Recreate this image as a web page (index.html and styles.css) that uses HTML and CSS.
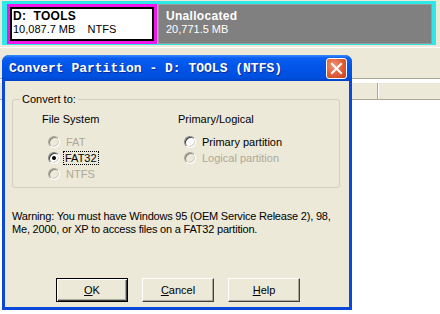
FILE: index.html
```html
<!DOCTYPE html>
<html lang="en">
<head>
  <meta charset="UTF-8">
  <meta name="viewport" content="width=device-width, initial-scale=1.0">
  <title>Convert Partition</title>
  <link rel="stylesheet" href="styles.css">
</head>
<body>
  <div class="map">
    <div class="strip">
      <div class="part part-d">
        <div class="part-inner">
          <div class="part-name">D:  TOOLS</div>
          <div class="part-size">10,087.7 MB    NTFS</div>
        </div>
      </div>
      <div class="part part-free">
        <div class="part-name">Unallocated</div>
        <div class="part-size">20,771.5 MB</div>
      </div>
    </div>
  </div>

  <div class="list">
    <div class="toolbar"></div>
    <div class="header">
      <div class="col col-main"></div>
      <div class="col col-rest"></div>
    </div>
    <div class="rows"></div>
  </div>

  <div class="dialog">
    <div class="titlebar">
      <span class="title">Convert Partition - D: TOOLS (NTFS)</span>
      <span class="close">
        <svg width="13" height="13" viewBox="0 0 13 13">
          <path d="M2 2 L11 11 M11 2 L2 11" stroke="#fff" stroke-width="2" stroke-linecap="square"/>
        </svg>
      </span>
    </div>
    <div class="body">
      <div class="group">
        <span class="group-title">Convert to:</span>
        <div class="columns">
          <div class="column">
            <div class="col-title">File System</div>
            <div class="radio disabled"><span class="dot"></span>FAT</div>
            <div class="radio checked"><span class="dot"></span><span class="focus">FAT32</span></div>
            <div class="radio disabled"><span class="dot"></span>NTFS</div>
          </div>
          <div class="column">
            <div class="col-title">Primary/Logical</div>
            <div class="radio"><span class="dot"></span>Primary partition</div>
            <div class="radio disabled"><span class="dot"></span>Logical partition</div>
          </div>
        </div>
      </div>
      <p class="warning">Warning: You must have Windows 95 (OEM Service Release 2), 98, Me, 2000, or XP to access files on a FAT32 partition.</p>
      <div class="buttons">
        <button class="btn default"><u>O</u>K</button>
        <button class="btn"><u>C</u>ancel</button>
        <button class="btn"><u>H</u>elp</button>
      </div>
    </div>
  </div>
</body>
</html>
```

FILE: styles.css
```css
body {
  margin: 0;
  width: 440px;
  height: 314px;
  overflow: hidden;
  position: relative;
  background: #fff;
  font-family: "Liberation Sans", Arial, sans-serif;
  font-size: 11px;
}
.map {
  height: 47px;
  box-sizing: border-box;
  padding: 1px 4px 2px 2px;
  background: #ece9d8;
}
.strip {
  display: flex;
  gap: 1px;
  height: 44px;
  box-sizing: border-box;
  padding: 3px 4px 1px 5px;
  background: #2ee8e8;
}
.part {
  height: 40px;
  box-sizing: border-box;
}
.part-d {
  width: 150px;
  border: 3px solid #f018e8;
}
.part-inner {
  height: 100%;
  box-sizing: border-box;
  border: 2px solid #000;
  background: #fff;
  padding: 1px 0 0 1px;
}
.part-free {
  flex: 1;
  background: #808080;
  border: 1px solid #9a9a9a;
  padding: 5px 0 0 7px;
  color: #fff;
}
.part-name {
  font-weight: bold;
  font-size: 12px;
  line-height: 13px;
  white-space: pre;
  letter-spacing: 0.3px;
}
.part-size {
  font-size: 11px;
  line-height: 13px;
  white-space: pre;
}
.list {
  height: 267px;
  display: flex;
  flex-direction: column;
}
.toolbar {
  height: 31px;
  background: #ece9d8;
  border-bottom: 1px solid #aca899;
  box-shadow: inset 0 1px #fff;
}
.header {
  display: flex;
  height: 18px;
  margin-top: 3px;
  background: #ece9d8;
  border-top: 1px solid #fff;
  border-bottom: 1px solid #aca899;
  box-sizing: border-box;
}
.col-main {
  width: 377px;
  border-right: 1px solid #aca899;
}
.col-rest {
  flex: 1;
  border-left: 1px solid #fff;
}
.rows {
  flex: 1;
  background: #fff;
}
.dialog {
  position: absolute;
  left: 2px;
  top: 55px;
  width: 350px;
  height: 255px;
  display: flex;
  flex-direction: column;
  background: #0a48dc;
  border-radius: 7px 7px 0 0;
}
.titlebar {
  height: 26px;
  display: flex;
  align-items: center;
  justify-content: space-between;
  padding: 0 5px 0 7px;
  border-radius: 7px 7px 0 0;
  background: linear-gradient(#3a8dff 0, #0a5ef0 3px, #0054e8 12px, #0050e0 22px, #0044c8 26px);
}
.title {
  font-family: "Liberation Mono", "Courier New", monospace;
  font-weight: bold;
  font-size: 13px;
  color: #fff;
  text-shadow: 1px 1px #0a2a90;
  white-space: pre;
}
.close {
  width: 21px;
  height: 21px;
  box-sizing: border-box;
  border: 1px solid #fff;
  border-radius: 3px;
  background: radial-gradient(circle at 35% 35%, #f09878 0, #e0603c 50%, #c8401c 100%);
  display: flex;
  align-items: center;
  justify-content: center;
}
.body {
  flex: 1;
  margin: 0 3px 3px 3px;
  background: #ece9d8;
  padding: 18px 9px 0 7px;
  color: #000;
}
.group {
  border: 1px solid #d0d0bf;
  border-radius: 3px;
  height: 89px;
  box-sizing: border-box;
}
.group-title {
  display: block;
  width: fit-content;
  line-height: 13px;
  margin: -7px 0 0 7px;
  padding: 0 2px;
  background: #ece9d8;
}
.columns {
  display: flex;
  padding: 7px 0 0 29px;
}
.column {
  width: 136px;
}
.col-title {
  line-height: 13px;
  margin-bottom: 8px;
}
.radio {
  display: flex;
  align-items: center;
  height: 16px;
  padding-left: 6px;
  white-space: nowrap;
}
.radio .dot {
  width: 12px;
  height: 12px;
  box-sizing: border-box;
  border-radius: 50%;
  border: 1px solid;
  border-color: #808080 #fff #fff #808080;
  box-shadow: inset 1px 1px #404040, inset -1px -1px #d4d0c8;
  background: #fff;
  margin-right: 6px;
  position: relative;
}
.radio.disabled {
  color: #aca899;
}
.radio.disabled .dot {
  background: #ece9d8;
  border-color: #aca899 #fff #fff #aca899;
  box-shadow: inset 1px 1px #808080, inset -1px -1px #d4d0c8;
}
.radio.checked .dot::after {
  content: "";
  position: absolute;
  left: 3px;
  top: 3px;
  width: 4px;
  height: 4px;
  border-radius: 50%;
  background: #000;
}
.focus {
  outline: 1px dotted #000;
  padding: 0 1px;
  margin-left: -2px;
  line-height: 12px;
}
.warning {
  margin: 22px 0 0 0;
  line-height: 13px;
  letter-spacing: -0.2px;
  margin-right: -4px;
}
.buttons {
  display: flex;
  gap: 14px;
  margin: 42px 0 0 44px;
}
.btn {
  width: 72px;
  height: 24px;
  box-sizing: border-box;
  background: #ece9d8;
  font-family: "Liberation Sans", Arial, sans-serif;
  font-size: 11px;
  color: #000;
  border: 1px solid;
  border-color: #fff #404040 #404040 #fff;
  box-shadow: inset -1px -1px #aca899;
  padding: 0;
}
.btn.default {
  border: 1px solid #000;
  box-shadow: inset 1px 1px #fff, inset -1px -1px #404040, inset -2px -2px #aca899;
}
```
